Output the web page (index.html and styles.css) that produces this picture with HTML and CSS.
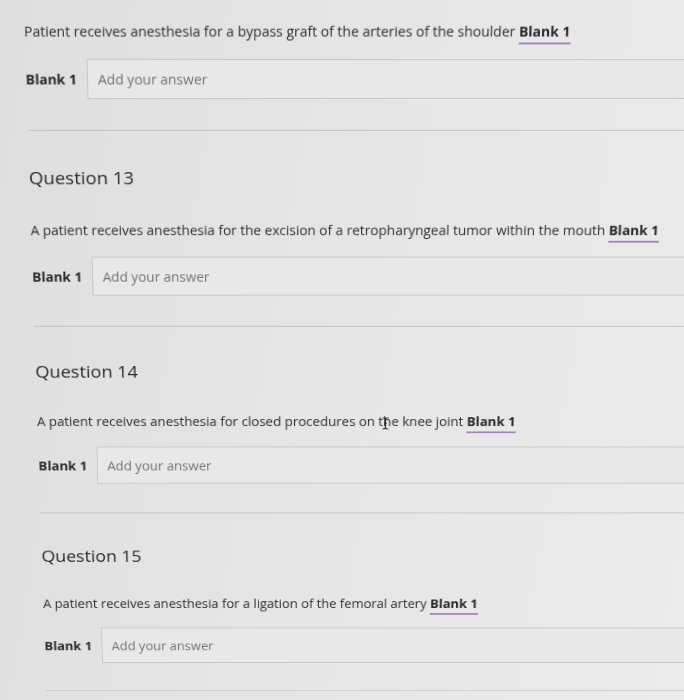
FILE: index.html
```html
<!DOCTYPE html>
<html lang="en">
<head>
<meta charset="utf-8">
<title>Questions</title>
<link rel="stylesheet" href="styles.css">
</head>
<body>
<div class="viewport">
<main class="page">
  <section class="question first">
    <p class="prompt">Patient receives anesthesia for a bypass graft of the arteries of the shoulder <span class="blank-ref">Blank 1</span></p>
    <div class="blank-row">
      <span class="blank-label">Blank 1</span>
      <div class="answer">Add your answer</div>
    </div>
  </section>
  <section class="question">
    <h2 class="q-title">Question 13</h2>
    <p class="prompt">A patient receives anesthesia for the excision of a retropharyngeal tumor within the mouth <span class="blank-ref">Blank 1</span></p>
    <div class="blank-row">
      <span class="blank-label">Blank 1</span>
      <div class="answer">Add your answer</div>
    </div>
  </section>
  <section class="question">
    <h2 class="q-title">Question 14</h2>
    <p class="prompt">A patient receives anesthesia for closed procedures on t<span class="cursor-host">h<svg class="ibeam" width="7" height="14" viewBox="0 0 7 14" aria-hidden="true"><path d="M0.5 0.8 Q3.5 0.8 3.5 2.5 Q3.5 0.8 6.5 0.8 M3.5 2.5 V11.5 M0.5 13.2 Q3.5 13.2 3.5 11.5 Q3.5 13.2 6.5 13.2 M2 7 H5" fill="none" stroke="#222" stroke-width="1.1"/></svg></span>e knee joint <span class="blank-ref">Blank 1</span></p>
    <div class="blank-row">
      <span class="blank-label">Blank 1</span>
      <div class="answer">Add your answer</div>
    </div>
  </section>
  <section class="question">
    <h2 class="q-title">Question 15</h2>
    <p class="prompt">A patient receives anesthesia for a ligation of the femoral artery <span class="blank-ref">Blank 1</span></p>
    <div class="blank-row">
      <span class="blank-label">Blank 1</span>
      <div class="answer">Add your answer</div>
    </div>
  </section>
</main>
</div>
</body>
</html>
```

FILE: styles.css
```css
html, body {
  margin: 0;
  padding: 0;
}
body {
  background: linear-gradient(100deg, #dedede 0%, #e5e5e5 45%, #ebebeb 100%);
  font-family: "Open Sans", "Liberation Sans", sans-serif;
  color: #333;
}
.viewport {
  width: 684px;
  height: 700px;
  overflow: hidden;
}
.page {
  width: 820px;
  padding: 22px 0 0 23px;
  box-sizing: border-box;
  transform-origin: 0 0;
  transform: perspective(1000px) rotateX(-7deg) skewX(2.05deg);
}
.question {
  border-bottom: 1px solid #c2c2c2;
  padding-bottom: 33px;
}
.first {
  padding-bottom: 32px;
}
.q-title {
  margin: 36px 0 0;
  font-size: 19px;
  line-height: 26px;
  font-weight: 400;
  color: #2b2b2b;
}
.prompt {
  margin: 33px 0 0;
  font-size: 14px;
  line-height: 20px;
  color: #303030;
}
.first .prompt {
  margin-top: 0;
}
.blank-ref {
  font-weight: 700;
  color: #2a2a2a;
  border-bottom: 2px solid #a683c6;
  padding-bottom: 2px;
}
.cursor-host {
  position: relative;
}
.ibeam {
  position: absolute;
  left: -1px;
  top: 5px;
}
.blank-row {
  display: flex;
  align-items: center;
  gap: 10px;
  margin-top: 18px;
}
.first .blank-row {
  margin-top: 18px;
}
.blank-label {
  font-weight: 700;
  font-size: 14px;
  color: #2a2a2a;
  width: 52px;
  flex: none;
  white-space: nowrap;
}
.answer {
  flex: 1;
  height: 42px;
  box-sizing: border-box;
  border: 1px solid #c6c6c6;
  border-right: none;
  background: #e8e8e8;
  padding-left: 10px;
  display: flex;
  align-items: center;
  font-size: 14px;
  color: #737373;
  white-space: nowrap;
}
.first .answer {
  height: 41px;
}
```
